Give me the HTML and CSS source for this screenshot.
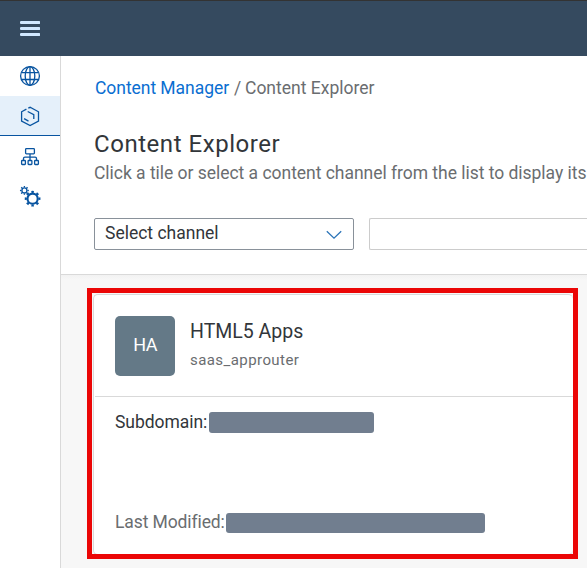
FILE: index.html
```html
<!DOCTYPE html>
<html lang="en">
<head>
<meta charset="utf-8">
<title>Content Explorer</title>
<link rel="stylesheet" href="styles.css">
</head>
<body>
<header class="shell">
  <svg class="menu" width="20" height="15" viewBox="0 0 20 15"><path d="M1.2 1.5h17.8M1.2 7.5h17.8M1.2 13.5h17.8"/></svg>
</header>
<div class="body">
  <nav class="side">
    <a class="item"><svg width="22" height="22" viewBox="0 0 22 22"><circle cx="11" cy="11" r="9.4"/><ellipse cx="11" cy="11" rx="4.8" ry="9.4"/><path d="M11 1.6v18.8M2.6 7.6h16.8M2.6 14.5h16.8"/></svg></a>
    <a class="item selected"><svg width="22" height="22" viewBox="0 0 22 22"><path d="M7.4 4.1 2.6 6.8v9.2l8.5 4.6 8.4-4.6V6.8L11.1 2.3 9.3 3.2M8.7 6.5l6.1 3.2v4.3M5.1 13.6l4.4 2.5"/></svg></a>
    <a class="item"><svg width="22" height="22" viewBox="0 0 22 22"><rect x="6.6" y="3.6" width="8.8" height="5.2" rx=".8"/><path d="M11 9v6.4M4.5 15.4v-1.8q0-1.4 1.4-1.4h10.2q1.4 0 1.4 1.4v1.8"/><rect x="2.6" y="15.5" width="3.8" height="4" rx=".7"/><rect x="9.1" y="15.5" width="3.8" height="4" rx=".7"/><rect x="15.6" y="15.5" width="3.8" height="4" rx=".7"/></svg></a>
    <a class="item"><svg width="22" height="22" viewBox="0 0 22 22"><circle cx="5.4" cy="5.4" r="2.5"/><circle class="teeth small" cx="5.4" cy="5.4" r="3.7" pathLength="48"/><circle class="gear" cx="13.6" cy="13.7" r="5.1"/><circle class="teeth" cx="13.6" cy="13.7" r="6.8" pathLength="48"/></svg></a>
  </nav>
  <main class="main">
    <section class="page-head">
      <div class="crumbs"><a class="crumb-link">Content Manager</a><span class="slash">/</span><span class="crumb-current">Content Explorer</span></div>
      <h1 class="title">Content Explorer</h1>
      <p class="hint">Click a tile or select a content channel from the list to display its</p>
      <div class="filters">
        <div class="select"><span class="select-text">Select channel</span><svg width="16" height="10" viewBox="0 0 16 10"><path d="M.8 1.2 8 8.2l7.2-7"/></svg></div>
        <div class="search"></div>
      </div>
    </section>
    <section class="tiles">
      <div class="highlight">
        <article class="card">
          <div class="card-head">
            <div class="avatar">HA</div>
            <div class="names"><div class="name">HTML5 Apps</div><div class="owner">saas_approuter</div></div>
          </div>
          <div class="card-body">
            <div class="row"><span class="domain">Subdomain:</span><span class="mask"></span></div>
            <div class="row last"><span class="modified">Last Modified:</span><span class="mask wide"></span></div>
          </div>
        </article>
      </div>
    </section>
  </main>
</div>
</body>
</html>
```
FILE: styles.css
```css
* { box-sizing: border-box; }
body { margin: 0; width: 587px; height: 568px; overflow: hidden; font-family: Roboto, sans-serif; color: #32363a; background: #fff; white-space: nowrap; }
svg { fill: none; display: block; flex: none; }
.shell { height: 56px; background: #354a5f; border-top: 1px solid #333; padding: 20px 0 0 20px; }
.menu { stroke: #d1e8ff; stroke-width: 3; stroke-linecap: round; }
.body { display: flex; height: 512px; }
.side { width: 61px; flex: none; border-right: 1px solid #d9d9d9; }
.item { display: flex; height: 40px; align-items: center; justify-content: center; }
.item svg { stroke: #0854a0; stroke-width: 1.3; }
.selected { background: #e5f0fa; border-bottom: 1px solid #0854a0; }
.item .gear { stroke-width: 2.1; }
.item .teeth { stroke-width: 2.1; stroke-dasharray: 2.8 3.2; stroke-dashoffset: 1.4; }
.item .small { stroke-width: 1.5; }
.main { width: 526px; flex: none; }
.page-head { height: 219px; padding: 20px 0 0 33px; border-bottom: 1px solid #d9d9d9; }
.crumbs { display: flex; height: 24px; line-height: 24px; font-size: 17.5px; color: #6a6d70; }
.crumb-link { width: 140px; padding-left: 1px; color: #0a6ed1; letter-spacing: -.05px; }
.slash { width: 11px; }
.title { margin: 29px 0 0; height: 30px; line-height: 30px; font-size: 24px; font-weight: 400; letter-spacing: .54px; }
.hint { margin: 2px 0 0; height: 24px; line-height: 24px; font-size: 17.5px; letter-spacing: -.03px; color: #6a6d70; }
.filters { display: flex; gap: 15px; margin-top: 33px; }
.select { display: flex; width: 260px; height: 32px; padding: 0 11px 2px 10px; align-items: center; justify-content: space-between; border: 1px solid #89919a; border-radius: 2px; font-size: 17.5px; }
.select svg { stroke: #2b74b8; stroke-width: 1.3; margin-top: 4px; }
.search { flex: 1; border: 1px solid #ccc; border-right: 0; border-radius: 2px 0 0 2px; }
.tiles { height: 293px; padding: 13px 0 0 26px; background: linear-gradient(#f2f2f2, #f7f7f7 5px); }
.highlight { width: 491px; height: 271px; border: 5px solid #eb0606; padding: 1px 0 0 1px; background: #f7f7f7; overflow: hidden; }
.card { height: 261px; border: 1px solid #d9d9d9; border-right: 0; border-radius: 5px; background: #fff; }
.card-head { display: flex; height: 102px; margin-left: 1px; padding: 21px 0 0 20px; border-bottom: 1px solid #d9d9d9; }
.avatar { width: 60px; height: 60px; border-radius: 5px; background: #647987; color: #fff; font-size: 18px; letter-spacing: -.7px; line-height: 58px; text-align: center; }
.names { margin-left: 15px; padding-top: 1px; }
.name { height: 30px; line-height: 30px; font-size: 19.5px; }
.owner { height: 26px; line-height: 26px; font-size: 15px; letter-spacing: .43px; color: #6a6d70; }
.card-body { padding: 15px 0 0 21px; }
.row { display: flex; height: 21px; line-height: 20px; font-size: 17.5px; }
.domain { width: 94px; letter-spacing: -.05px; }
.modified { width: 111px; line-height: 18px; letter-spacing: -.1px; color: #6a6d70; }
.mask { width: 165px; height: 21px; border-radius: 3px; background: #717e8f; }
.last { margin-top: 80px; }
.wide { width: 259px; height: 20px; }
```
